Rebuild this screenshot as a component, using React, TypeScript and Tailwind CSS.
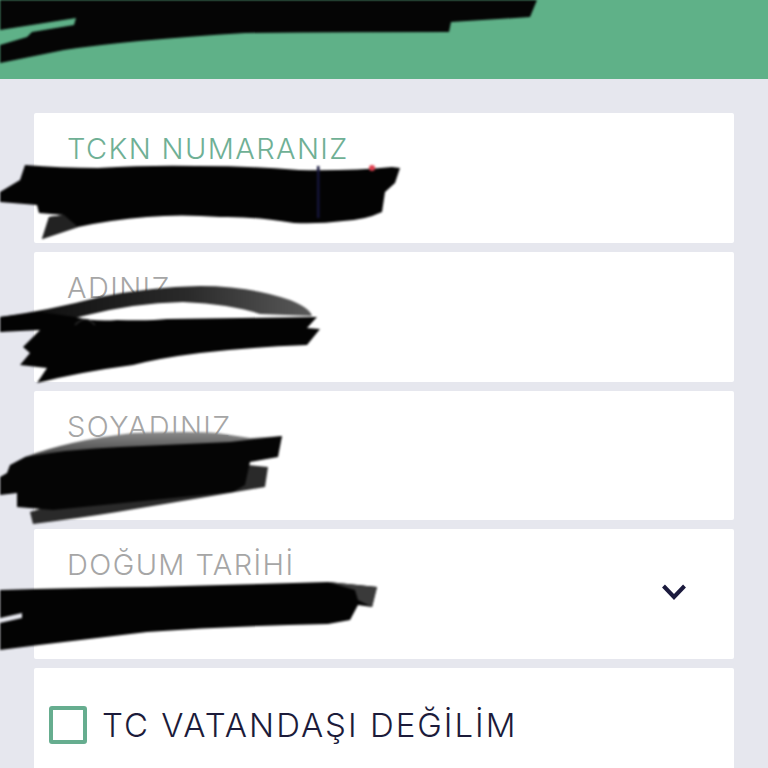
const fontStack = { fontFamily: '"Inter", "Liberation Sans", sans-serif' };

const fields = [
  { label: 'TCKN NUMARANIZ', color: 'text-[#6fb095]' },
  { label: 'ADINIZ', color: 'text-[#a6a6a6]' },
  { label: 'SOYADINIZ', color: 'text-[#a6a6a6]' },
];

const Field = ({ label, color, children }: { label: string; color: string; children?: React.ReactNode }) => (
  <div className="relative h-[129.75px] bg-white pl-[34px] pt-[18px] rounded-[2px]">
    <label className={`block text-[29px] leading-[36px] font-light tracking-[1.4px] -ml-[1px] ${color}`}>{label}</label>
    {children}
  </div>
);

// the black marker strokes that were painted over the screenshot
const Scribbles = () => (
  <svg className="absolute inset-0 blur-[1.1px]" width="768" height="768" viewBox="0 0 768 768">
    <defs>
      <linearGradient id="arc" x1="0" y1="0" x2="1" y2="0">
        <stop offset="0" stopColor="#0a0a0a" />
        <stop offset="0.6" stopColor="#2a2a2a" />
        <stop offset="1" stopColor="#5a5a5a" />
      </linearGradient>
      <linearGradient id="top" x1="0" y1="0" x2="0" y2="1">
        <stop offset="0" stopColor="#8a8a8a" />
        <stop offset="1" stopColor="#1a1a1a" />
      </linearGradient>
    </defs>
    <path d="M0 0H537L530 17L451 22L449 32Q350 32 245 33Q130 40 64 50L0 63V45L27 37L32 32L74 25L76 18L0 30Z" fill="#050505" />
    <path d="M0 202V192L20 180L25 165Q60 168 98 168Q150 165 196 166Q250 166 299 170Q350 171 392 167L400 168L395 183L385 192L382 212Q365 220 343 221Q320 224 294 223Q250 216 220 217Q180 214 147 217Q110 220 78 227L42 239L49 217L64 215L39 213L37 205Z" fill="#030303" />
    <path d="M64 215L78 227L42 239L49 217Z" fill="#222222" />
    <rect x="317" y="166" width="2.5" height="52" fill="#14143a" />
    <circle cx="372" cy="168" r="3" fill="#e0404f" />
    <path d="M0 317Q50 310 100 297Q150 287 200 286Q250 286 290 300Q310 308 312 316L260 314Q230 304 183 302Q133 303 83 316L60 322L0 332Z" fill="url(#arc)" />
    <path d="M0 317L40 312L75 317Q95 322 117 320Q150 321 167 319L317 317L307 328L320 329L307 345Q250 347 200 353Q160 358 133 365Q80 372 37 383L47 368L20 365L30 353L23 347L40 330L0 332Z" fill="#030303" />
    <path d="M75 325Q85 314 95 325" fill="none" stroke="#2a2a2a" strokeWidth="1.5" />
    <path d="M25 457Q70 440 133 433Q190 431 217 433L250 438L282 436L278 450L160 452L40 470Z" fill="url(#top)" />
    <path d="M53 505L30 512L33 524Q80 518 117 512L200 498L265 487L268 467L248 465L233 488Z" fill="#2a2a2a" />
    <path d="M282 436L278 457L250 462L245 485L233 492L53 510L17 507V493L0 495V477L7 473L10 465L25 457Q70 449 120 447L230 442Z" fill="#050505" />
    <path d="M0 590Q70 588 147 587L328 582L377 587L372 607L358 605L350 620L328 624Q230 626 147 632L39 645L0 650V623L22 618L22 613L0 618Z" fill="#030303" />
    <path d="M328 582L377 587L372 607L358 600L355 590Z" fill="#3a3a3a" />
  </svg>
);

export default function App() {
  return (
    <div className="relative w-[768px] h-[768px] overflow-hidden bg-[#e6e7ee]" style={fontStack}>
      <div className="h-[79px] bg-[#5fb188]" />
      <div className="flex flex-col gap-[9px] px-[34px] pt-[34px]">
        {fields.map((f) => (
          <Field key={f.label} label={f.label} color={f.color} />
        ))}
        <Field label="DOĞUM TARİHİ" color="text-[#a6a6a6]">
          <svg className="absolute right-[47px] top-[54px]" width="26" height="18" viewBox="0 0 26 18" fill="none">
            <path d="M2.5 3L13 14L23.5 3" stroke="#1b1a3d" strokeWidth="4" />
          </svg>
        </Field>
        <div className="flex h-[130px] items-start gap-[15px] bg-white pl-[15px] pt-[38px] rounded-[2px]">
          <div className="h-[38px] w-[38px] rounded-[3px] border-[4px] border-[#66ad8f]" />
          <span className="text-[33px] leading-[38px] font-light tracking-[2px] text-[#1c1b3a]">TC VATANDAŞI DEĞİLİM</span>
        </div>
      </div>
      <Scribbles />
    </div>
  );
}
